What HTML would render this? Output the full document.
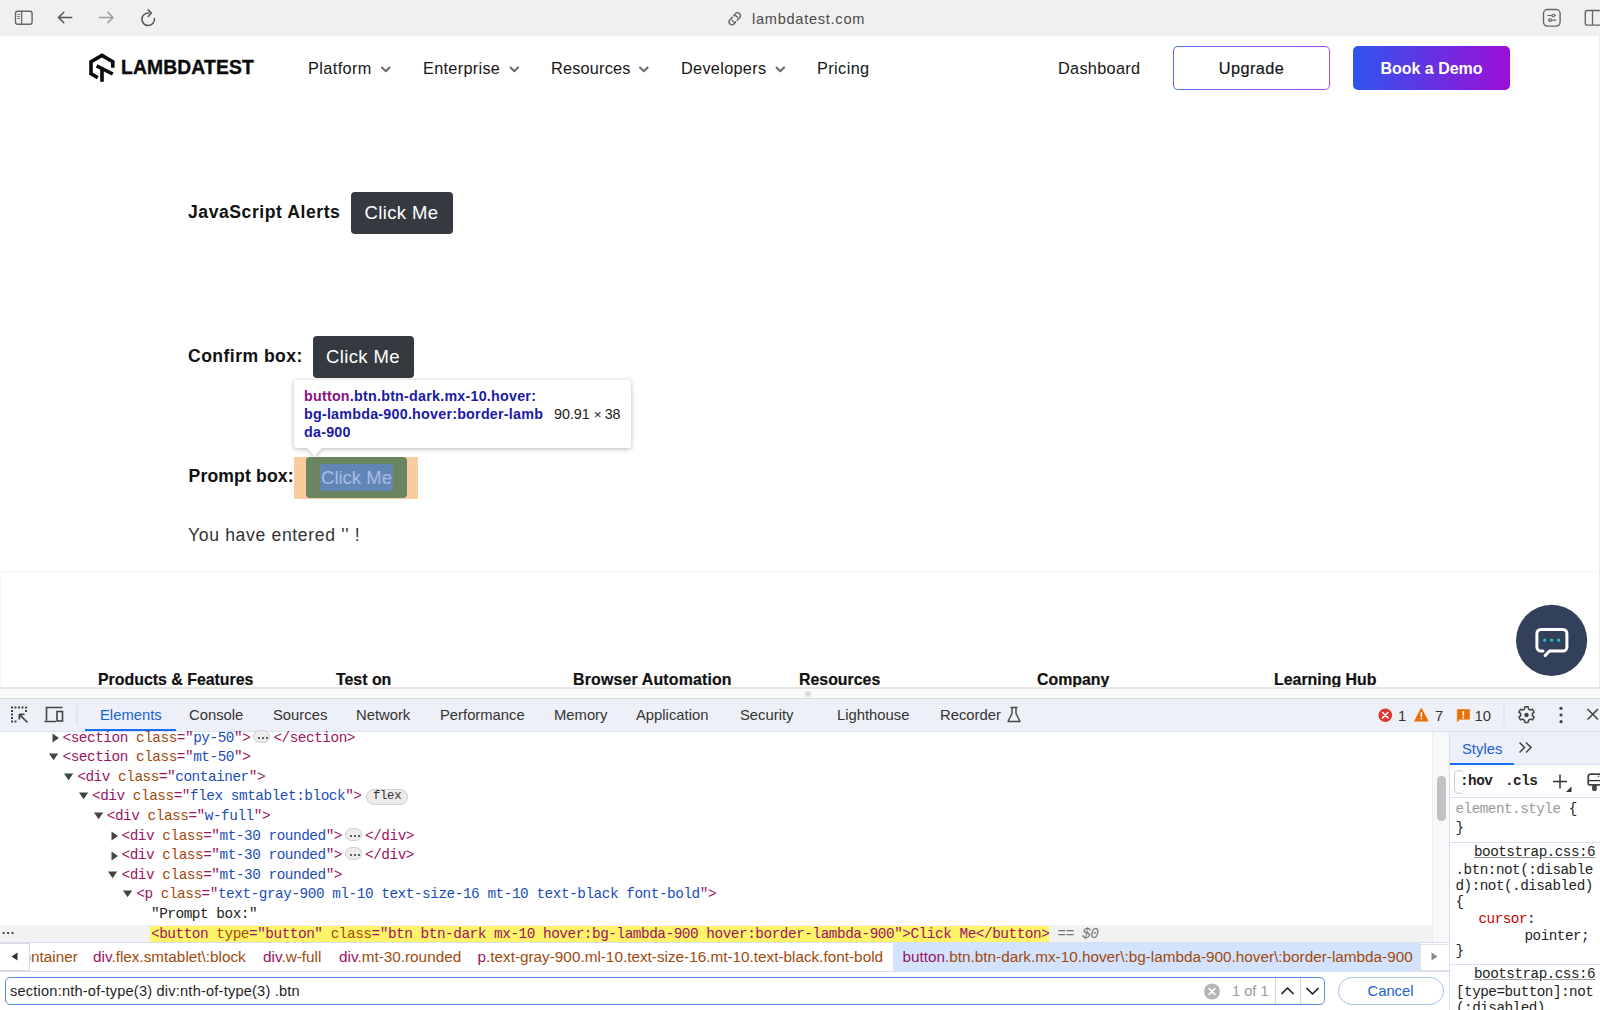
<!DOCTYPE html>
<html><head><meta charset="utf-8">
<style>
*{margin:0;padding:0;box-sizing:border-box}
html,body{width:1600px;height:1010px;overflow:hidden;background:#fff;font-family:"Liberation Sans",sans-serif;position:relative}
.a{position:absolute;white-space:nowrap}
svg{position:absolute;overflow:visible}
#chrome{left:0;top:0;width:1600px;height:36px;background:#f0f0f0}
.nav{font-size:16.3px;color:#161616;line-height:20px;top:58px;letter-spacing:0.4px}
.btnd{background:#343a40;border-radius:4px;color:#fff;font-size:18.5px;text-align:center}
.lbl{font-size:17.6px;font-weight:bold;color:#111;line-height:22px}
.fh{font-size:15.9px;font-weight:bold;color:#111;line-height:20px;top:670px;-webkit-text-stroke:0.2px #111}
.tab{font-size:14.8px;color:#333;top:706px;line-height:18px}
.row{position:absolute;white-space:pre;font-family:"Liberation Mono",monospace;font-size:14.4px;letter-spacing:-0.47px;line-height:19.6px;height:19.6px;color:#222}
.t{color:#9a1461}.n{color:#a04a0c}.v{color:#1c4db5}
.ell{display:inline-block;position:relative;width:17px;height:13px;border:1px solid #cfcfcf;border-radius:6.5px;background:#ececec;vertical-align:-1px;margin:0 3px 0 3px}
.flexb{display:inline-block;font-size:12.4px;letter-spacing:-0.4px;line-height:13.5px;padding:0 6px 0 6.5px;border:1px solid #cfcfcf;border-radius:8px;background:#ececec;color:#333;margin-left:4px;vertical-align:1px}
.bc{font-size:15.3px;line-height:20px;top:946.5px}
.sty{position:absolute;white-space:pre;font-family:"Liberation Mono",monospace;font-size:14.3px;letter-spacing:-0.5px;line-height:16.3px;color:#222}
</style></head><body>

<!-- ============ Browser chrome ============ -->
<div class="a" id="chrome"></div>
<svg style="left:0;top:0" width="200" height="36">
  <rect x="15.5" y="11.3" width="16.6" height="13" rx="2.2" fill="none" stroke="#666" stroke-width="1.4"/>
  <line x1="21.6" y1="11.3" x2="21.6" y2="24.3" stroke="#666" stroke-width="1.3"/>
  <g fill="#666"><rect x="17.5" y="14" width="2.3" height="1"/><rect x="17.5" y="16" width="2.3" height="1"/><rect x="17.5" y="18" width="2.3" height="1"/></g>
  <g stroke="#555" stroke-width="1.5" fill="none" stroke-linecap="round" stroke-linejoin="round">
    <path d="M71.8 17.5H58.5M63.8 12.2L58.5 17.5L63.8 22.8"/>
  </g>
  <g stroke="#9a9a9a" stroke-width="1.5" fill="none" stroke-linecap="round" stroke-linejoin="round">
    <path d="M99.5 17.5H113M107.8 12.2L113 17.5L107.8 22.8"/>
  </g>
  <g stroke="#555" stroke-width="1.5" fill="none" stroke-linecap="round" stroke-linejoin="round">
    <path d="M148.6 13A6.3 6.3 0 1 0 154.4 18.4"/>
    <path d="M148.1 9.9L151.4 13.1L148.3 16.4"/>
  </g>
</svg>
<svg style="left:0;top:0" width="1600" height="36">
  <g transform="translate(734.7,18.8) rotate(-48)" stroke="#5e5e5e" stroke-width="1.3" fill="none">
    <path d="M0.2 -2.9H-4.1a2.9 2.9 0 0 0 0 5.8H-1.6"/>
    <path d="M-0.2 2.9H4.1a2.9 2.9 0 0 0 0-5.8H1.6"/>
    <path d="M1.4 -2.9a2.9 2.9 0 0 1 1.2 4.4M-1.4 2.9a2.9 2.9 0 0 1 -1.2 -4.4"/>
  </g>
  <rect x="1543.5" y="9.5" width="16.6" height="16.6" rx="4" fill="none" stroke="#666" stroke-width="1.4"/>
  <g stroke="#666" stroke-width="1.2" fill="none"><path d="M1547.3 15.5h8.6M1548 20.2h8.3"/></g>
  <g fill="#f0f0f0" stroke="#666" stroke-width="1.1"><circle cx="1553.2" cy="15.5" r="1.3"/><circle cx="1550.2" cy="20.2" r="1.3"/></g>
  <rect x="1585.3" y="10.5" width="16" height="14.6" rx="2.2" fill="none" stroke="#666" stroke-width="1.4"/>
  <line x1="1592.5" y1="10.5" x2="1592.5" y2="25" stroke="#666" stroke-width="1.3"/>
</svg>
<div class="a" style="left:752px;top:9.5px;font-size:14.6px;color:#4a4a4a;line-height:18px;letter-spacing:0.72px">lambdatest.com</div>

<!-- ============ Nav ============ -->

<svg style="left:0;top:36px" width="300" height="64">
  <g transform="translate(0,-36)" fill="none" stroke="#0b0b0b" stroke-width="3.6" stroke-linejoin="miter">
    <path d="M97.8 77.6L91 73.8V61.8L102 55.4L112.8 61.8V67.8"/>
    <path d="M102 68V81.8"/>
    <path d="M96.6 65.8L112.8 74"/>
  </g>
</svg>
<div class="a" style="left:121px;top:54px;font-size:19.3px;font-weight:bold;color:#0b0b0b;line-height:28px;letter-spacing:0.15px;-webkit-text-stroke:0.35px #0b0b0b">LAMBDATEST</div>
<div class="a nav" style="left:308px">Platform</div>
<div class="a nav" style="left:423px;letter-spacing:0.3px">Enterprise</div>
<div class="a nav" style="left:551px;letter-spacing:0.2px">Resources</div>
<div class="a nav" style="left:681px;letter-spacing:0.3px">Developers</div>
<div class="a nav" style="left:817px">Pricing</div>
<svg style="left:0;top:0" width="800" height="100">
  <g fill="none" stroke="#6a6a6a" stroke-width="2" stroke-linecap="round" stroke-linejoin="round">
    <path d="M382 67.5l3.8 3.8l3.8-3.8"/>
    <path d="M510.5 67.5l3.8 3.8l3.8-3.8"/>
    <path d="M640 67.5l3.8 3.8l3.8-3.8"/>
    <path d="M776.5 67.5l3.8 3.8l3.8-3.8"/>
  </g>
</svg>
<div class="a nav" style="left:1058px;letter-spacing:0.3px;top:57.5px">Dashboard</div>
<div class="a" style="left:1173px;top:46px;width:157px;height:44px;border-radius:5px;background:linear-gradient(90deg,#5a6cf6,#b246e6)"></div>
<div class="a" style="left:1174.2px;top:47.2px;width:154.6px;height:41.6px;border-radius:4px;background:#fff"></div>
<div class="a nav" style="left:1173px;width:157px;text-align:center;-webkit-text-stroke:0.2px #161616">Upgrade</div>
<div class="a" style="left:1353px;top:46px;width:157px;height:44px;border-radius:5px;background:linear-gradient(90deg,#2f55ef,#9d0ed6)"></div>
<div class="a" style="left:1353px;top:58.5px;width:157px;text-align:center;font-size:16px;font-weight:bold;color:#fff;line-height:20px">Book a Demo</div>


<!-- ============ Content ============ -->

<div class="a lbl" style="left:188px;top:201px;letter-spacing:0.55px">JavaScript Alerts</div>
<div class="a btnd" style="left:351px;top:192px;width:102px;height:42px;line-height:42px;letter-spacing:0.4px;text-indent:-1px">Click Me</div>
<div class="a lbl" style="left:188px;top:345px;letter-spacing:0.45px">Confirm box:</div>
<div class="a btnd" style="left:313px;top:336px;width:101px;height:42px;line-height:42px;letter-spacing:0.4px;text-indent:-1px">Click Me</div>

<!-- tooltip -->
<div class="a" style="left:0;top:0;width:700px;height:470px;filter:drop-shadow(0 1.5px 2.5px rgba(0,0,0,0.28))">
<div class="a" style="left:294px;top:380px;width:337px;height:67.5px;background:#fff;border-radius:3px"></div>
<div class="a" style="left:306px;top:447px;width:17px;height:9px;background:#fff;clip-path:polygon(0 0,100% 0,50% 100%)"></div>
</div>
<div class="a" style="left:304px;top:387px;font-size:14.3px;font-weight:bold;color:#1a1aa6;line-height:18px;letter-spacing:0.23px"><span style="color:#881280">button</span>.btn.btn-dark.mx-10.hover:</div>
<div class="a" style="left:304px;top:405px;font-size:14.3px;font-weight:bold;color:#1a1aa6;line-height:18px;letter-spacing:0.23px">bg-lambda-900.hover:border-lamb</div>
<div class="a" style="left:304px;top:423px;font-size:14.3px;font-weight:bold;color:#1a1aa6;line-height:18px;letter-spacing:0.23px">da-900</div>
<div class="a" style="left:554px;top:405px;font-size:14.3px;color:#222;line-height:18px">90.91<span style="font-size:13.5px;padding:0 3px 0 4px">&#215;</span>38</div>

<div class="a lbl" style="left:188.5px;top:465px;letter-spacing:0.15px">Prompt box:</div>
<div class="a" style="left:294px;top:457px;width:124px;height:42px;background:#f9cc9d"></div>
<div class="a" style="left:306px;top:457px;width:101px;height:41px;background:#6b8560;border-radius:4px"></div>
<div class="a" style="left:320px;top:464px;width:73px;height:27px;background:#6186b4"></div>
<div class="a" style="left:306px;top:457px;width:101px;height:41px;line-height:41px;text-align:center;font-size:18.5px;color:#a7bde6">Click Me</div>

<div class="a" style="left:188px;top:524px;font-size:17.6px;color:#333;line-height:22px;letter-spacing:0.65px">You have entered '' !</div>

<div class="a" style="left:0;top:571px;width:1600px;height:1px;background:#f4f4f4"></div>
<div class="a" style="left:0;top:572px;width:1px;height:115px;background:#f6f6f6"></div>
<div class="a" style="left:1599px;top:36px;width:1px;height:652px;background:#ececec"></div>

<!-- footer headings -->
<div class="a fh" style="left:98px">Products &amp; Features</div>
<div class="a fh" style="left:336px">Test on</div>
<div class="a fh" style="left:573px;letter-spacing:0.17px">Browser Automation</div>
<div class="a fh" style="left:799px">Resources</div>
<div class="a fh" style="left:1037px">Company</div>
<div class="a fh" style="left:1274px">Learning Hub</div>

<!-- chat bubble -->
<svg style="left:1515px;top:604px" width="73" height="73">
  <circle cx="36.6" cy="36.4" r="35.6" fill="#334059"/>
  <path d="M28 47.1H25.9a4 4 0 0 1-4-4V29.5a4 4 0 0 1 4-4H47.9a4 4 0 0 1 4 4V43.1a4 4 0 0 1-4 4H34.4L30.2 51.6" fill="none" stroke="#fff" stroke-width="3" stroke-linecap="round" stroke-linejoin="round"/>
  <g fill="#1ec3d3"><circle cx="29.7" cy="36.2" r="1.6"/><circle cx="36.7" cy="36.2" r="1.6"/><circle cx="43.6" cy="36.2" r="1.6"/></g>
</svg>


<!-- ============ Devtools ============ -->

<div class="a" style="left:0;top:687px;width:1600px;height:2px;background:#e6e6e6"></div>
<div class="a" style="left:0;top:689px;width:1600px;height:9px;background:#fafafa"></div>
<div class="a" style="left:805px;top:690.5px;width:6px;height:6px;border-radius:3px;background:#dcdcdc"></div>
<div class="a" style="left:0;top:698px;width:1600px;height:1px;background:#d9d9d9"></div>
<div class="a" style="left:0;top:699px;width:1600px;height:32px;background:#eef0f7"></div>
<div class="a" style="left:0;top:731px;width:1600px;height:1px;background:#d5e0f5"></div>
<div class="a" style="left:85px;top:729px;width:91px;height:2px;background:#1b6ef3"></div>
<!-- tab icons -->
<svg style="left:0;top:699px" width="80" height="32">
  <g fill="#444">
    <rect x="11" y="7.5" width="2" height="2"/><rect x="14.5" y="7.5" width="2" height="2"/><rect x="18" y="7.5" width="2" height="2"/><rect x="21.5" y="7.5" width="2" height="2"/><rect x="25" y="7.5" width="2" height="2"/>
    <rect x="11" y="11" width="2" height="2"/><rect x="11" y="14.5" width="2" height="2"/><rect x="11" y="18" width="2" height="2"/><rect x="11" y="21.5" width="2" height="2"/>
    <rect x="14.5" y="21.5" width="2" height="2"/>
    <rect x="25" y="11" width="2" height="2"/>
  </g>
  <path d="M19.3 15.3L27.5 23.5M19.3 15.3H24.5M19.3 15.3V20.5" stroke="#444" stroke-width="1.7" fill="none"/>
  <path d="M46.5 21.5V8.5H62.5M44.5 22.5H56" stroke="#444" stroke-width="1.6" fill="none"/>
  <rect x="57" y="12.5" width="5.5" height="9.5" fill="none" stroke="#444" stroke-width="1.6"/>
  <rect x="76.5" y="6" width="1" height="20" fill="#d0dcf0"/>
</svg>
<div class="a tab" style="left:100px;color:#1a5fd6">Elements</div>
<div class="a tab" style="left:189px">Console</div>
<div class="a tab" style="left:273px">Sources</div>
<div class="a tab" style="left:356px">Network</div>
<div class="a tab" style="left:440px">Performance</div>
<div class="a tab" style="left:554px">Memory</div>
<div class="a tab" style="left:636px">Application</div>
<div class="a tab" style="left:740px">Security</div>
<div class="a tab" style="left:837px">Lighthouse</div>
<div class="a tab" style="left:940px">Recorder</div>
<svg style="left:1000px;top:699px" width="30" height="32"><path d="M10.5 8.5H17.5M12 8.5V14.5L8 22.5H20L16 14.5V8.5" fill="none" stroke="#444" stroke-width="1.4" stroke-linejoin="round"/></svg>
<!-- right tab icons -->
<svg style="left:1370px;top:699px" width="230" height="32">
  <circle cx="15.3" cy="16.2" r="6.8" fill="#dc362e"/>
  <path d="M12.6 13.5L18 18.9M18 13.5L12.6 18.9" stroke="#fff" stroke-width="1.6" stroke-linecap="round"/>
  <path d="M51.3 9.8L57.8 22H44.8Z" fill="#e8710a" stroke="#e8710a" stroke-width="1.2" stroke-linejoin="round"/>
  <rect x="50.6" y="13.2" width="1.5" height="4.6" fill="#fff"/><rect x="50.6" y="18.8" width="1.5" height="1.5" fill="#fff"/>
  <path d="M87.3 10.5H99.5V20.2H90L87.3 22.8Z" fill="#e8710a" stroke="#e8710a" stroke-width="0.6" stroke-linejoin="round"/>
  <rect x="92.5" y="12" width="1.6" height="4.8" fill="#fff"/><rect x="92.5" y="17.8" width="1.6" height="1.6" fill="#fff"/>
  <rect x="133.5" y="6" width="1" height="20" fill="#d0dcf0"/>
</svg>
<div class="a tab" style="left:1398px;top:707px;color:#333">1</div>
<div class="a tab" style="left:1435px;top:707px;color:#333">7</div>
<div class="a tab" style="left:1474.5px;top:707px;color:#333">10</div>
<svg style="left:1510px;top:699px" width="90" height="32">
  <g transform="translate(16.5,16)">
    <path d="M-1.6 -8.2h3.2l0.5 2.3a6 6 0 0 1 1.7 1l2.2-0.8l1.6 2.8l-1.8 1.5a6 6 0 0 1 0 2l1.8 1.5l-1.6 2.8l-2.2-0.8a6 6 0 0 1-1.7 1l-0.5 2.3h-3.2l-0.5-2.3a6 6 0 0 1-1.7-1l-2.2 0.8l-1.6-2.8l1.8-1.5a6 6 0 0 1 0-2l-1.8-1.5l1.6-2.8l2.2 0.8a6 6 0 0 1 1.7-1z" fill="none" stroke="#444" stroke-width="1.5" stroke-linejoin="round"/>
    <circle cx="0" cy="0" r="2.2" fill="#444"/>
  </g>
  <g fill="#444"><circle cx="51" cy="9.3" r="1.6"/><circle cx="51" cy="16" r="1.6"/><circle cx="51" cy="22.7" r="1.6"/></g>
  <path d="M77.5 10L88 20.5M88 10L77.5 20.5" stroke="#444" stroke-width="1.6"/>
</svg>

<!-- DOM tree -->
<div class="a" style="left:1432px;top:732px;width:17px;height:210px;background:#f8f8f8;border-left:1px solid #ececec"></div>
<div class="a" style="left:1437px;top:776px;width:8.5px;height:45px;border-radius:4.25px;background:#c2c2c2"></div>
<div class="a" style="left:0;top:925px;width:1432px;height:17px;background:#f2f2f2"></div><div class="a" style="left:2.3px;top:931.3px;width:14px;height:4px"><svg style="left:0;top:0" width="14" height="4"><g fill="#333"><rect x="0.5" y="1" width="2.2" height="2.2" rx="1.1"/><rect x="5" y="1" width="2.2" height="2.2" rx="1.1"/><rect x="9.5" y="1" width="2.2" height="2.2" rx="1.1"/></g></svg></div><svg style="left:51.5px;top:733.00px" width="8" height="10"><path d="M0.5 0.5L7 5L0.5 9.5Z" fill="#444"/></svg><div class="row" style="left:62.5px;top:728.50px"><span class="t">&lt;section</span> <span class="n">class</span><span class="t">="</span><span class="v">py-50</span><span class="t">"&gt;</span><span class="ell"><svg style="left:3.5px;top:6px" width="10" height="4"><g fill="#333"><rect x="0" y="0" width="2" height="2" rx="1"/><rect x="4" y="0" width="2" height="2" rx="1"/><rect x="8" y="0" width="2" height="2" rx="1"/></g></svg></span><span class="t">&lt;/section&gt;</span></div><svg style="left:49.30px;top:753.10px" width="10" height="8"><path d="M0 0.5H9.2L4.6 7.2Z" fill="#444"/></svg><div class="row" style="left:62.5px;top:748.10px"><span class="t">&lt;section</span> <span class="n">class</span><span class="t">="</span><span class="v">mt-50</span><span class="t">"&gt;</span></div><svg style="left:64.05px;top:772.70px" width="10" height="8"><path d="M0 0.5H9.2L4.6 7.2Z" fill="#444"/></svg><div class="row" style="left:77.25px;top:767.70px"><span class="t">&lt;div</span> <span class="n">class</span><span class="t">="</span><span class="v">container</span><span class="t">"&gt;</span></div><svg style="left:78.80px;top:792.30px" width="10" height="8"><path d="M0 0.5H9.2L4.6 7.2Z" fill="#444"/></svg><div class="row" style="left:92px;top:787.30px"><span class="t">&lt;div</span> <span class="n">class</span><span class="t">="</span><span class="v">flex smtablet:block</span><span class="t">"&gt;</span><span class="flexb">flex</span></div><svg style="left:93.55px;top:811.90px" width="10" height="8"><path d="M0 0.5H9.2L4.6 7.2Z" fill="#444"/></svg><div class="row" style="left:106.75px;top:806.90px"><span class="t">&lt;div</span> <span class="n">class</span><span class="t">="</span><span class="v">w-full</span><span class="t">"&gt;</span></div><svg style="left:110.5px;top:831.00px" width="8" height="10"><path d="M0.5 0.5L7 5L0.5 9.5Z" fill="#444"/></svg><div class="row" style="left:121.5px;top:826.50px"><span class="t">&lt;div</span> <span class="n">class</span><span class="t">="</span><span class="v">mt-30 rounded</span><span class="t">"&gt;</span><span class="ell"><svg style="left:3.5px;top:6px" width="10" height="4"><g fill="#333"><rect x="0" y="0" width="2" height="2" rx="1"/><rect x="4" y="0" width="2" height="2" rx="1"/><rect x="8" y="0" width="2" height="2" rx="1"/></g></svg></span><span class="t">&lt;/div&gt;</span></div><svg style="left:110.5px;top:850.60px" width="8" height="10"><path d="M0.5 0.5L7 5L0.5 9.5Z" fill="#444"/></svg><div class="row" style="left:121.5px;top:846.10px"><span class="t">&lt;div</span> <span class="n">class</span><span class="t">="</span><span class="v">mt-30 rounded</span><span class="t">"&gt;</span><span class="ell"><svg style="left:3.5px;top:6px" width="10" height="4"><g fill="#333"><rect x="0" y="0" width="2" height="2" rx="1"/><rect x="4" y="0" width="2" height="2" rx="1"/><rect x="8" y="0" width="2" height="2" rx="1"/></g></svg></span><span class="t">&lt;/div&gt;</span></div><svg style="left:108.30px;top:870.70px" width="10" height="8"><path d="M0 0.5H9.2L4.6 7.2Z" fill="#444"/></svg><div class="row" style="left:121.5px;top:865.70px"><span class="t">&lt;div</span> <span class="n">class</span><span class="t">="</span><span class="v">mt-30 rounded</span><span class="t">"&gt;</span></div><svg style="left:123.05px;top:890.30px" width="10" height="8"><path d="M0 0.5H9.2L4.6 7.2Z" fill="#444"/></svg><div class="row" style="left:136.25px;top:885.30px"><span class="t">&lt;p</span> <span class="n">class</span><span class="t">="</span><span class="v">text-gray-900 ml-10 text-size-16 mt-10 text-black font-bold</span><span class="t">"&gt;</span></div><div class="row" style="left:151px;top:904.90px">"Prompt box:"</div><div class="row" style="left:151px;top:924.50px"><span style="background:#fdf46a;display:inline-block;height:17px;line-height:17px;padding-left:1.5px;margin-left:-1.5px;vertical-align:top;margin-top:1px"><span class="t">&lt;button</span> <span class="n">type</span><span class="t">="</span><span class="v" style="color:#9a1461">button</span><span class="t">"</span> <span class="n">class</span><span class="t">="</span><span class="v" style="color:#9a1461">btn btn-dark mx-10 hover:bg-lambda-900 hover:border-lambda-900</span><span class="t">"&gt;</span><span style="color:#9a1461">Click Me</span><span class="t">&lt;/button&gt;</span></span> <span style="color:#777">== <i>$0</i></span></div>

<!-- breadcrumb -->
<div class="a" style="left:0;top:941.5px;width:1449px;height:1px;background:#d5e0f5"></div>
<div class="a" style="left:0;top:942.5px;width:1449px;height:28.5px;background:#fff"></div>
<div class="a" style="left:893px;top:942.5px;width:527px;height:28.5px;background:#d3e3fd"></div>
<div class="a" style="left:0;top:943px;width:29.5px;height:28px;background:#fff;border:1px solid #dadada;border-left:none"></div>
<svg style="left:10px;top:952px" width="10" height="10"><path d="M7.5 0.5L1.5 4.5L7.5 8.5Z" fill="#333"/></svg>
<div class="a" style="left:1420px;top:943.5px;width:29px;height:27.5px;background:#fff;border:1px solid #e1e1e1;border-right:none"></div>
<svg style="left:1430px;top:951.5px" width="10" height="10"><path d="M1.5 0.5L7.5 4.5L1.5 8.5Z" fill="#888"/></svg>
<div class="a" style="left:29.5px;top:942.5px;width:863px;height:28px;overflow:hidden">
<div class="a bc" style="left:-7px;top:4px"><span class="n">ontainer</span></div>
<div class="a bc" style="left:63.5px;top:4px"><span class="t">div</span><span class="n">.flex.smtablet\:block</span></div>
<div class="a bc" style="left:233.5px;top:4px"><span class="t">div</span><span class="n">.w-full</span></div>
<div class="a bc" style="left:309.5px;top:4px"><span class="t">div</span><span class="n">.mt-30.rounded</span></div>
<div class="a bc" style="left:448px;top:4px"><span class="t">p</span><span class="n">.text-gray-900.ml-10.text-size-16.mt-10.text-black.font-bold</span></div>
</div>
<div class="a bc" style="left:902.5px"><span class="t">button</span><span class="n">.btn.btn-dark.mx-10.hover\:bg-lambda-900.hover\:border-lambda-900</span></div>
<div class="a" style="left:0;top:971px;width:1449px;height:1px;background:#d5e0f5"></div>

<!-- search bar -->
<div class="a" style="left:0;top:972px;width:1449px;height:38px;background:#fff"></div>
<div class="a" style="left:5px;top:977px;width:1320px;height:28px;border:1.5px solid #5b8ee6;border-radius:5px;background:#fff"></div>
<div class="a" style="left:10px;top:981px;font-size:14.6px;color:#1f1f1f;line-height:20px;letter-spacing:0.2px">section:nth-of-type(3) div:nth-of-type(3) .btn</div>
<svg style="left:1200px;top:980px" width="24" height="24"><circle cx="12" cy="11.5" r="8" fill="#b5b5b5"/><path d="M9 8.5L15 14.5M15 8.5L9 14.5" stroke="#fff" stroke-width="1.6" stroke-linecap="round"/></svg>
<div class="a" style="left:1232px;top:981px;font-size:14.6px;color:#9a9a9a;line-height:20px">1 of 1</div>
<div class="a" style="left:1274.5px;top:978px;width:1px;height:26px;background:#d7d7d7"></div>
<div class="a" style="left:1299.5px;top:978px;width:1px;height:26px;background:#d7d7d7"></div>
<svg style="left:1275px;top:978px" width="50" height="26"><path d="M7 15.5L12.5 10L18 15.5M32 10.5L37.5 16L43 10.5" fill="none" stroke="#222" stroke-width="1.7" stroke-linecap="round" stroke-linejoin="round"/></svg>
<div class="a" style="left:1337.5px;top:977px;width:106px;height:28px;border:1px solid #a8c2f0;border-radius:14px;background:#fff"></div>
<div class="a" style="left:1337.5px;top:981px;width:106px;text-align:center;font-size:14.8px;color:#1a5fd6;line-height:20px">Cancel</div>

<!-- styles pane -->
<div class="a" style="left:1449px;top:732px;width:151px;height:278px;background:#fff;border-left:1px solid #d5e0f5"></div>
<div class="a" style="left:1450px;top:732px;width:150px;height:32px;background:#eef0f7"></div>
<div class="a" style="left:1450px;top:764px;width:150px;height:1px;background:#d5e0f5"></div>
<div class="a" style="left:1450px;top:762.5px;width:64px;height:2px;background:#1b6ef3"></div>
<div class="a tab" style="left:1462px;top:740px;color:#1a5fd6">Styles</div>
<svg style="left:1518px;top:741px" width="18" height="14"><path d="M1.5 1.5L6.5 6.5L1.5 11.5M8 1.5L13 6.5L8 11.5" fill="none" stroke="#444" stroke-width="1.5"/></svg>
<div class="a" style="left:1454px;top:769.5px;width:10px;height:24px;border:1px solid #c8c8c8;border-radius:5px;border-right:none"></div>
<div class="sty" style="left:1460px;top:773px;font-weight:bold;color:#222">:hov</div><div class="sty" style="left:1505px;top:773px;font-weight:bold;color:#222">.cls</div>
<svg style="left:1550px;top:772px" width="50" height="24">
  <path d="M10 2.5V16.5M3 9.5H17" stroke="#333" stroke-width="1.5"/>
  <path d="M21.5 14.5V20H16Z" fill="#333"/>
  <path d="M54 2.2H40.5a2.3 2.3 0 0 0-2.3 2.3v7a1.3 1.3 0 0 0 1.3 1.3H54" fill="none" stroke="#444" stroke-width="1.8"/><path d="M39 8.6H54" stroke="#333" stroke-width="1.3"/><rect x="42.1" y="12.6" width="4.7" height="6.3" rx="1.6" fill="#444"/><circle cx="48.5" cy="4.2" r="0.8" fill="#333"/><circle cx="51.7" cy="5.6" r="0.8" fill="#333"/>
</svg>
<div class="a" style="left:1450px;top:797px;width:150px;height:1px;background:#d5e0f5"></div>
<div class="sty" style="left:1455.5px;top:801px;color:#999">element.style <span style="color:#222">{</span></div>
<div class="sty" style="left:1455.5px;top:819.5px">}</div>
<div class="a" style="left:1450px;top:842px;width:150px;height:1px;background:#d5e0f5"></div>
<div class="sty" style="left:1474px;top:844px;text-decoration:underline;text-decoration-color:#999">bootstrap.css:6</div>
<div class="sty" style="left:1455.5px;top:861.5px">.btn:not(:disable</div>
<div class="sty" style="left:1455.5px;top:877.5px">d):not(.disabled)</div>
<div class="sty" style="left:1455.5px;top:893.5px">{</div>
<div class="sty" style="left:1478.5px;top:911px"><span style="color:#c80000">cursor</span>:</div>
<div class="sty" style="left:1524.5px;top:927.5px">pointer;</div>
<div class="sty" style="left:1455.5px;top:942.5px">}</div>
<div class="a" style="left:1450px;top:964px;width:150px;height:1px;background:#d5e0f5"></div>
<div class="sty" style="left:1474px;top:966px;text-decoration:underline;text-decoration-color:#999">bootstrap.css:6</div>
<div class="sty" style="left:1456px;top:984px">[type=button]:not</div>
<div class="sty" style="left:1456px;top:1000px">(:disabled)</div>


</body></html>
